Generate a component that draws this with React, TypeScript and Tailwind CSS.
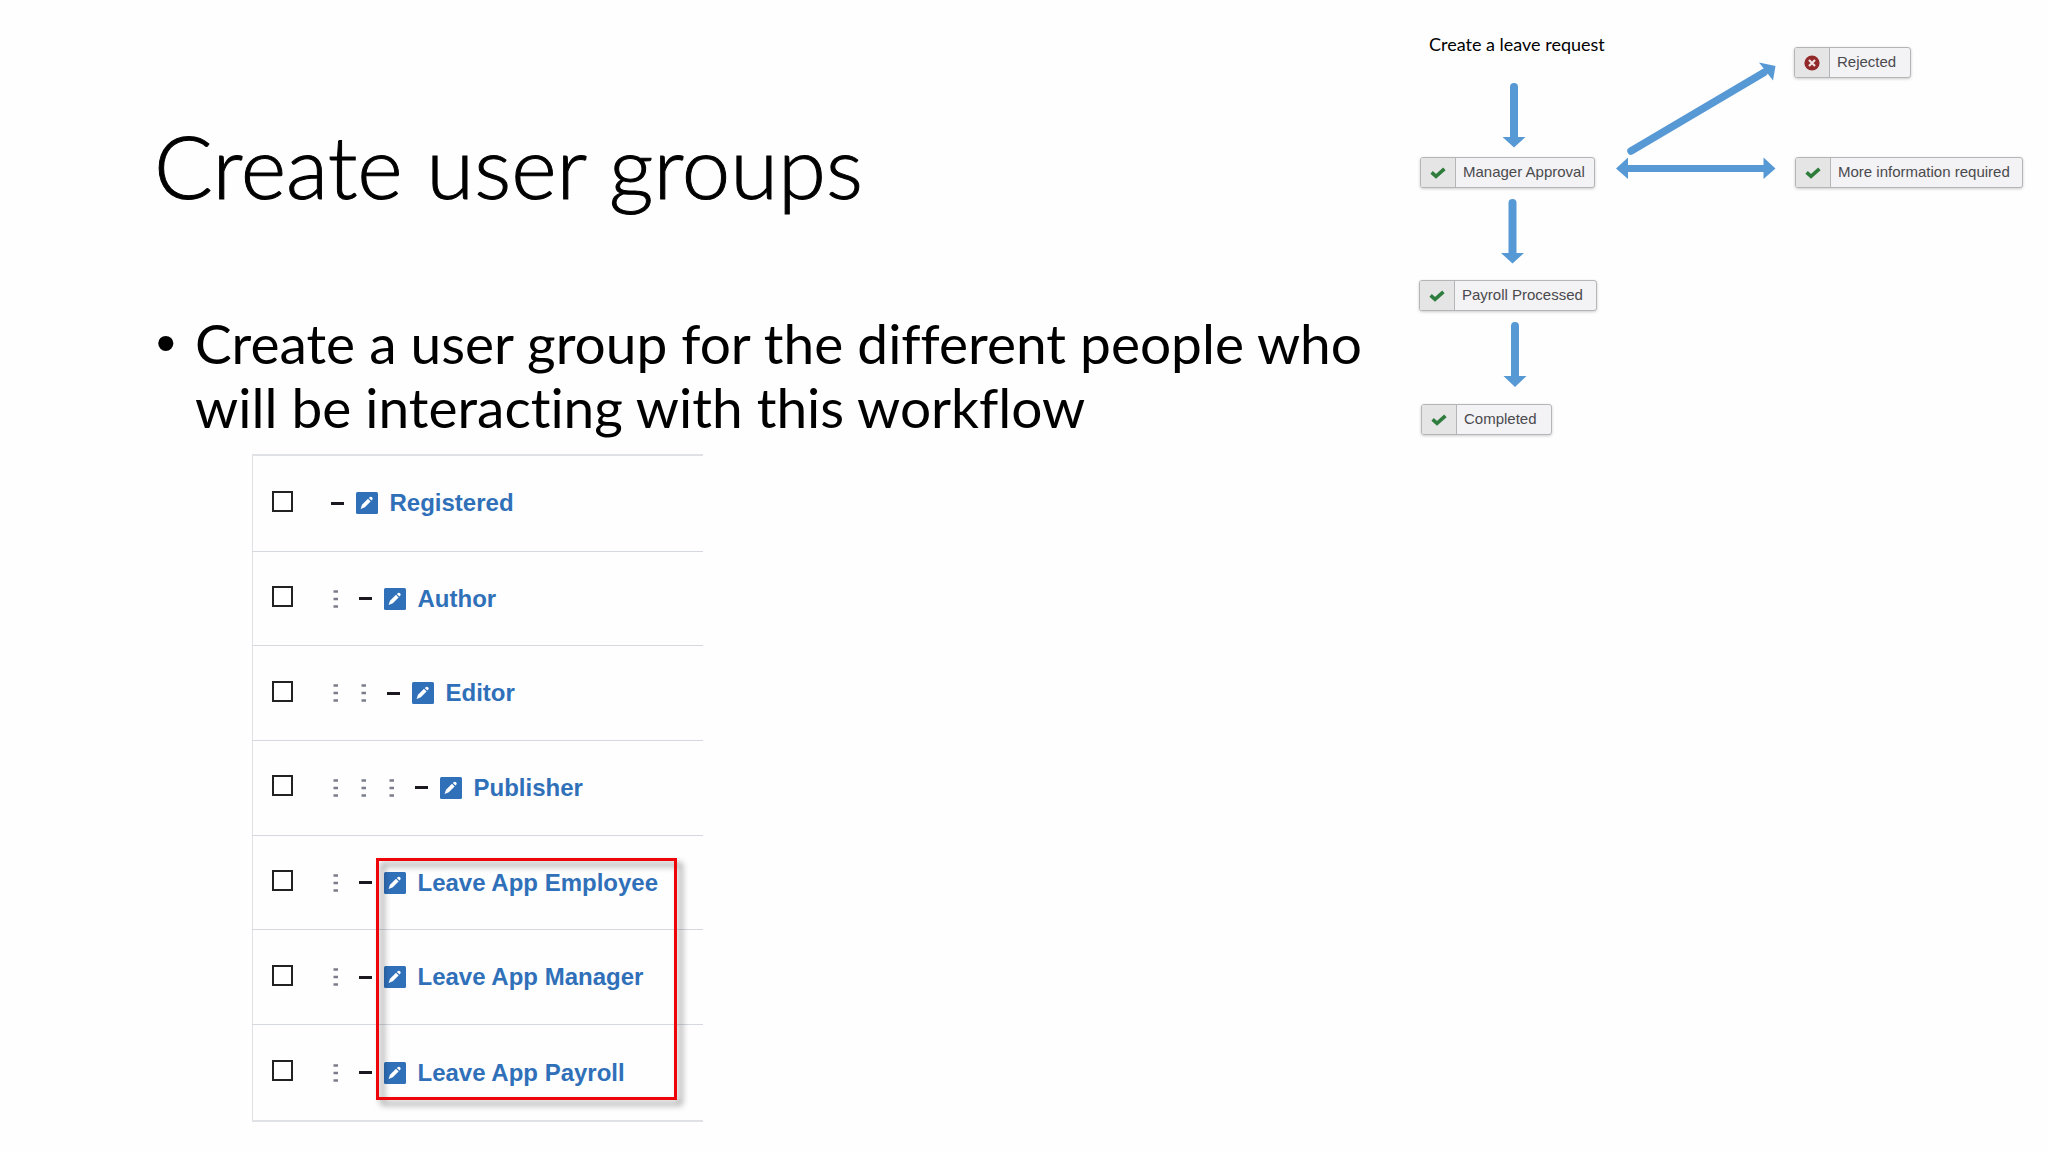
import React, { useState } from 'react';

interface Group {
  name: string;
  level: number;
}

const groups: Group[] = [
  { name: 'Registered', level: 0 },
  { name: 'Author', level: 1 },
  { name: 'Editor', level: 2 },
  { name: 'Publisher', level: 3 },
  { name: 'Leave App Employee', level: 1 },
  { name: 'Leave App Manager', level: 1 },
  { name: 'Leave App Payroll', level: 1 },
];

const CheckIcon = () => (
  <svg width="16" height="12" viewBox="0 0 16 12" fill="none" aria-hidden="true">
    <path d="M1.6 5.4 6 9.3 14.4 1.8" stroke="#2e7d3c" strokeWidth="3.6" />
  </svg>
);

const CancelIcon = () => (
  <svg width="16" height="16" viewBox="0 0 16 16" aria-hidden="true">
    <circle cx="8" cy="8" r="7.6" fill="#932a2a" />
    <path d="M5 5 11 11M11 5 5 11" stroke="#f0e4e4" strokeWidth="2.2" />
  </svg>
);

const EditIcon = () => (
  <svg width="22" height="22" viewBox="0 0 22 22" className="shrink-0" aria-hidden="true">
    <rect width="22" height="22" rx="1.5" fill="#2f70b9" />
    <path d="M4.6 17 6 12.8 12 6.8 14.6 9.400 8.800 15.200Z" fill="#fff" />
    <path d="M12.8 6 14 4.900Q14.900 4.300 15.700 5.100L16.400 5.800Q17 6.600 16.400 7.500L15.400 8.600Z" fill="#fff" />
  </svg>
);

const LevelDots = () => (
  <svg width="28" height="22" viewBox="0 0 28 22" className="shrink-0" aria-hidden="true">
    <path d="M2.5 3.5H7M2.5 11H7M2.5 18.5H7" stroke="#7b7d8a" strokeWidth="2.4" />
  </svg>
);

const Status: React.FC<{ label: string; rejected?: boolean; className: string }> = ({ label, rejected, className }) => (
  <button
    type="button"
    className={`absolute flex h-[31px] overflow-hidden rounded-[3px] border border-[#b5b5b7] bg-[#f3f2f4] text-[15px] leading-7 text-[#4a4a4e] shadow-[0_1px_3px_rgba(0,0,0,0.2)] ${className}`}
  >
    <span className="flex h-full w-[35px] items-center justify-center border-r border-[#b5b5b7] bg-[#e5e5e6]">
      {rejected ? <CancelIcon /> : <CheckIcon />}
    </span>
    <span className="flex-1 pl-[7px] text-left whitespace-nowrap">{label}</span>
  </button>
);

const Workflow = () => (
  <aside className="relative h-[450px] w-[648px] shrink-0 font-['Liberation_Sans',sans-serif]">
    <svg className="absolute inset-0" width="648" height="450" viewBox="0 0 648 450" fill="#5799d5" aria-hidden="true">
      <path d="M110 87a4 4 0 0 1 8 0V137H125.5L114 147.5 102.5 137H110Z" />
      <path d="M108.5 203a4 4 0 0 1 8 0V253H124L112.5 263.5 101 253H108.5Z" />
      <path d="M111 326a4 4 0 0 1 8 0V376H126.5L115 387 103.5 376H111Z" />
      <path d="M216 168.5 228 157.5V165H363.5V157.5L375.5 168.5 363.5 179V172H228V179Z" />
      <path d="M231 151 364 72.5" stroke="#5799d5" strokeWidth="7.5" strokeLinecap="round" />
      <path d="M359 62.5 375.5 66 373 80.5Z" />
    </svg>
    <p className="absolute top-[33px] left-[29px] font-['Lato',sans-serif] text-[18px] leading-[22px] whitespace-nowrap text-black">
      Create a leave request
    </p>
    <Status label="Rejected" rejected className="top-[47px] left-[394px] w-[117px]" />
    <Status label="Manager Approval" className="top-[157px] left-[20px] w-[175px]" />
    <Status label="More information required" className="top-[157px] left-[395px] w-[228px]" />
    <Status label="Payroll Processed" className="top-[280px] left-[19px] w-[178px]" />
    <Status label="Completed" className="top-[404px] left-[21px] w-[131px]" />
  </aside>
);

const GroupTable = () => {
  const [selected, setSelected] = useState<string[]>([]);

  const toggle = (name: string) =>
    setSelected((prev) => (prev.includes(name) ? prev.filter((n) => n !== name) : [...prev, name]));

  return (
    <div className="relative mt-[15px] ml-[98px] w-[451px] font-['Liberation_Sans',sans-serif]">
      <table className="h-[668px] w-full border-collapse border-t-2 border-b-2 border-l border-[#dfe1e4]">
        <tbody>
          {groups.map((group) => (
            <tr key={group.name} className="border-b border-[#d5d9df]">
              <td className="w-[75px] pb-1 pl-[19px]">
                <input
                  type="checkbox"
                  aria-label={`Select ${group.name}`}
                  checked={selected.includes(group.name)}
                  onChange={() => toggle(group.name)}
                  className="block size-[21px] appearance-none border-2 border-[#222] bg-white checked:bg-[#2d6db8]"
                />
              </td>
              <td>
                <div className="flex items-center pl-[3px]">
                  {Array.from({ length: group.level }, (_, i) => (
                    <LevelDots key={i} />
                  ))}
                  <span className="mr-3 h-[3px] w-[13px] bg-[#1c1820]" />
                  <EditIcon />
                  <a href="#" className="ml-3 text-[24px] leading-7 font-bold whitespace-nowrap text-[#2f70b9]">
                    {group.name}
                  </a>
                </div>
              </td>
            </tr>
          ))}
        </tbody>
      </table>
      {/* Callout round the three new groups */}
      <div className="pointer-events-none absolute top-[404px] left-[124px] h-[242px] w-[301px] border-3 border-[#ee0509] drop-shadow-[5px_5px_3px_rgba(0,0,0,0.45)]" />
    </div>
  );
};

const App: React.FC = () => {
  return (
    <main className="flex min-h-screen w-full items-start bg-[#fefefe] font-['Lato',sans-serif] text-black [font-variant-ligatures:none]">
      <section className="min-w-0 flex-1 pt-[114px] pl-[154px]">
        <h1 className="text-[87px] leading-[104px] font-light whitespace-nowrap [-webkit-text-stroke:1px_black]">
          Create user groups
        </h1>
        <ul className="mt-[93px]">
          <li className="flex text-[55px] leading-16">
            <span className="w-[41px] shrink-0 pl-[2px] font-['Liberation_Sans',sans-serif] text-[56px]">•</span>
            <span className="whitespace-nowrap">
              Create a user group for the different people who
              <br />
              will be interacting with this workflow
            </span>
          </li>
        </ul>
        <GroupTable />
      </section>
      <Workflow />
    </main>
  );
};

export default App;
